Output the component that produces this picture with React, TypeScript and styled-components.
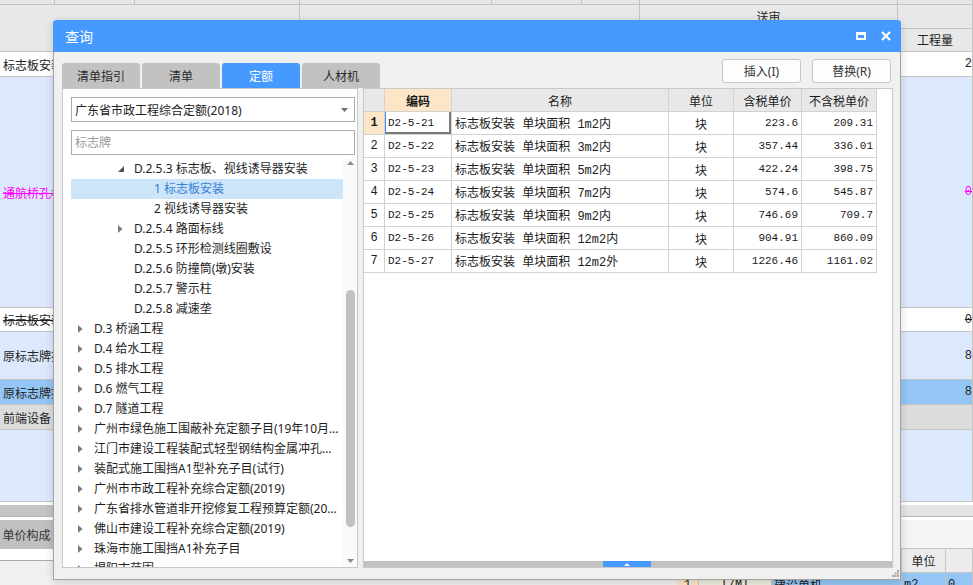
import React from 'react';
import styled, { createGlobalStyle, css } from 'styled-components';

const UI_FONT = `"Noto Sans", "Noto Sans CJK SC", sans-serif`;
const CJK_FONT = `"Noto Sans CJK SC", sans-serif`;
const GRID_FONT = `"Liberation Mono", "Noto Sans CJK SC", monospace`;

const BLUE = '#4599ff';
const LINE = '#c4c4c4';

const GlobalStyle = createGlobalStyle`
  html, body { margin: 0; padding: 0; }
  body { background: #f0f0f0; font-family: ${UI_FONT}; overflow: hidden; }
  * { box-sizing: border-box; }
`;

const Page = styled.div`
  position: relative;
  width: 973px;
  height: 585px;
  overflow: hidden;
  background: #f0f0f0;
  font-family: ${UI_FONT};
  font-size: 12px;
  color: #1e1e1e;
`;

/* ---------- spreadsheet behind the dialog ---------- */

const Sheet = styled.div`
  display: flex;
  flex-direction: column;
  height: 100%;
  & > * { flex-shrink: 0; }
`;

const TopStrip = styled.div`
  display: flex;
  height: 5px;
  background: #e6e6e6;
  border-bottom: 1px solid ${LINE};
`;

const StripCell = styled.div<{ $w?: number }>`
  flex: ${p => (p.$w ? `0 0 ${p.$w}px` : '1')};
  border-right: 1px solid ${LINE};
`;

const HeaderBand = styled.div`
  display: flex;
  height: 47px;
  background: #e8e8e8;
  border-bottom: 1px solid ${LINE};
`;

const HeadBlock = styled.div<{ $w?: number }>`
  flex: ${p => (p.$w ? `0 0 ${p.$w}px` : '1')};
  display: flex;
  flex-direction: column;
  border-right: 1px solid ${LINE};
`;

const HeadLabel = styled.div<{ $split?: boolean }>`
  flex: 1;
  display: flex;
  align-items: center;
  justify-content: center;
  font-family: ${CJK_FONT};
  font-size: 12px;
  color: #222;
  border-bottom: ${p => (p.$split ? `1px solid ${LINE}` : 'none')};
`;

const SheetRow = styled.div<{ $h: number; $bg: string }>`
  display: grid;
  grid-template-columns: 55px 1fr 75px;
  height: ${p => p.$h}px;
  background: ${p => p.$bg};
  border-bottom: 1px solid ${LINE};
`;

type Tone = 'plain' | 'struck' | 'pink';

const SheetCell = styled.div<{ $right?: boolean; $tone?: Tone }>`
  display: flex;
  align-items: center;
  justify-content: ${p => (p.$right ? 'flex-end' : 'flex-start')};
  padding-left: ${p => (p.$right ? 0 : 3)}px;
  overflow: hidden;
  white-space: nowrap;
  border-right: 1px solid ${LINE};
  font-family: ${p => (p.$right ? GRID_FONT : CJK_FONT)};
  font-size: 12px;
  color: ${p => (p.$tone === 'pink' ? '#ff00ff' : '#222')};
  text-decoration: ${p => (p.$tone && p.$tone !== 'plain' ? 'line-through' : 'none')};
`;

const WhiteGap = styled.div<{ $h: number }>`
  height: ${p => p.$h}px;
  background: #fff;
`;

const SplitBar = styled.div`
  display: grid;
  grid-template-columns: 55px 1fr;
  height: 12px;
  background: #e4e4e4;
  border-bottom: 1px solid #b8b8b8;
  & > span { background: #c4c4c4; }
`;

const BottomPane = styled.div`
  flex: 1 1 auto !important;
  min-height: 0;
  overflow: hidden;
  display: flex;
  flex-direction: column;
`;

const PaneTabs = styled.div`
  flex-shrink: 0;
  display: flex;
  height: 29px;
  background: #f4f4f4;
  border-bottom: 1px solid ${LINE};
`;

const PaneTab = styled.div`
  width: 53px;
  display: flex;
  align-items: center;
  justify-content: center;
  background: #c0c0c0;
  font-family: ${CJK_FONT};
  font-size: 12px;
  color: #333;
`;

const PaneBody = styled.div`
  flex: 1;
  display: grid;
  grid-template-columns: 677px 1fr;
`;

const PaneLeft = styled.div`
  display: flex;
  flex-direction: column;
  background: #f0f0f0;
  & > span {
    height: 12px;
    background: #fff;
    border-bottom: 1px solid #aaa;
  }
`;

const SubTable = styled.div`
  display: grid;
  grid-template-columns: 22px 73px 130px 44px 1fr;
  grid-auto-rows: 24px;
  align-content: start;
`;

const SubCell = styled.div<{ $bg: string; $center?: boolean }>`
  display: flex;
  align-items: center;
  justify-content: ${p => (p.$center ? 'center' : 'flex-start')};
  padding-left: ${p => (p.$center ? 0 : 2)}px;
  background: ${p => p.$bg};
  border-right: 1px solid ${LINE};
  border-bottom: 1px solid ${LINE};
  font-family: ${GRID_FONT};
  font-size: 12px;
  white-space: nowrap;
  overflow: hidden;
`;

/* ---------- dialog ---------- */

const Dialog = styled.div`
  position: absolute;
  left: 53px;
  top: 20px;
  width: 848px;
  height: 560px;
  display: flex;
  flex-direction: column;
  background: #f0f0f0;
  border: 1px solid #a3a3a3;
  border-top: none;
  border-radius: 4px 4px 0 0;
  box-shadow: 0 2px 8px rgba(0, 0, 0, 0.16);
`;

const TitleBar = styled.div`
  flex-shrink: 0;
  height: 32px;
  margin: 0 -1px;
  display: flex;
  align-items: center;
  padding: 0 10px 0 12px;
  background: ${BLUE};
  border-radius: 4px 4px 0 0;
  color: #fff;
  font-family: ${CJK_FONT};
  font-size: 14px;
`;

const TitleText = styled.span`
  flex: 1;
`;

const MaxIcon = styled.span`
  width: 10px;
  height: 8px;
  border: 2px solid #fff;
  border-top-width: 3px;
  margin-right: 15px;
`;

const Body = styled.div`
  position: relative;
  flex: 1;
  min-height: 0;
  display: flex;
  flex-direction: column;
  padding: 7px 7px 11px 8px;
`;

const Toolbar = styled.div`
  flex-shrink: 0;
  display: flex;
  align-items: flex-end;
  height: 29px;
`;

const Tabs = styled.div`
  display: flex;
  gap: 2px;
`;

const Tab = styled.div<{ $active?: boolean }>`
  width: 78px;
  height: 25px;
  display: flex;
  align-items: center;
  justify-content: center;
  border-radius: 3px 3px 0 0;
  background: ${p => (p.$active ? BLUE : '#c2c2c2')};
  color: ${p => (p.$active ? '#fff' : '#2a2a2a')};
  font-family: ${CJK_FONT};
  font-size: 12px;
`;

const Actions = styled.div`
  margin-left: auto;
  margin-right: 2px;
  align-self: flex-start;
  display: flex;
  gap: 11px;
`;

const ActionButton = styled.div`
  width: 79px;
  height: 24px;
  display: flex;
  align-items: center;
  justify-content: center;
  background: #fdfdfd;
  border: 1px solid #c6c6c6;
  border-radius: 3px;
  font-family: ${UI_FONT};
  font-size: 12px;
  color: #333;
`;

const Main = styled.div`
  flex: 1;
  display: flex;
  gap: 5px;
  min-height: 0;
`;

const LeftPanel = styled.div`
  width: 296px;
  display: flex;
  flex-direction: column;
  padding: 8px 0 0 8px;
  background: #fff;
  border: 1px solid #c8c8c8;
  min-height: 0;
`;

const Select = styled.div`
  flex-shrink: 0;
  height: 25px;
  margin-right: 2px;
  display: flex;
  align-items: center;
  justify-content: space-between;
  padding: 0 6px 0 3px;
  border: 1px solid #ababab;
  font-size: 12px;
  color: #222;
`;

const Search = styled.input`
  flex-shrink: 0;
  height: 25px;
  margin: 8px 2px 0 0;
  padding: 0 3px;
  border: 1px solid #ababab;
  outline: none;
  font-family: ${UI_FONT};
  font-size: 12px;
  color: #222;
  &::placeholder { color: #9a9a9a; }
`;

const Tree = styled.div`
  flex: 1;
  display: flex;
  margin-top: 4px;
  min-height: 0;
`;

const TreeList = styled.div`
  flex: 1;
  min-width: 0;
  overflow: hidden;
`;

const TreeRow = styled.div<{ $level: number; $selected?: boolean }>`
  height: 20px;
  display: flex;
  align-items: center;
  padding-left: ${p => 5 + p.$level * 20}px;
  background: ${p => (p.$selected ? '#cce5f8' : 'transparent')};
  color: ${p => (p.$selected ? '#3a7fd6' : '#1e1e1e')};
  font-size: 12px;
  line-height: 20px;
`;

const Toggle = styled.span`
  flex: 0 0 18px;
  display: flex;
  align-items: center;
  padding-left: 2px;
`;

const TreeText = styled.span`
  flex: 1;
  min-width: 0;
  overflow: hidden;
  white-space: nowrap;
  text-overflow: ellipsis;
`;

const VScroll = styled.div`
  flex: 0 0 14px;
  display: flex;
  flex-direction: column;
  align-items: center;
  padding: 2px 0 4px;
  background: #fafafa;
`;

const Thumb = styled.div`
  width: 9px;
  height: 237px;
  margin-top: 125px;
  border-radius: 5px;
  background: #c1c1c1;
`;

const DownArrow = styled.div`
  margin-top: auto;
  display: flex;
`;

const GridPanel = styled.div`
  flex: 1;
  display: flex;
  flex-direction: column;
  background: #fff;
  border: 1px solid #c8c8c8;
  min-width: 0;
`;

const Table = styled.div`
  flex: 1;
  display: grid;
  grid-template-columns: 21px 67px 217px 65px 68px 75px;
  grid-auto-rows: 23px;
  align-content: start;
`;

type Kind = 'head' | 'num' | 'code' | 'text' | 'unit' | 'price';

const Cell = styled.div<{ $kind: Kind; $bg?: string; $bold?: boolean; $focus?: boolean }>`
  display: flex;
  align-items: center;
  justify-content: ${p =>
    p.$kind === 'price' ? 'flex-end' : p.$kind === 'code' || p.$kind === 'text' ? 'flex-start' : 'center'};
  padding: 0 3px;
  background: ${p => p.$bg ?? '#fff'};
  border-right: 1px solid #d2d2d2;
  border-bottom: 1px solid #d2d2d2;
  font-family: ${p => (p.$kind === 'head' || p.$kind === 'unit' ? CJK_FONT : GRID_FONT)};
  font-size: ${p => (p.$kind === 'code' || p.$kind === 'price' ? 11 : 12)}px;
  font-weight: ${p => (p.$bold ? 700 : 400)};
  color: #1a1a1a;
  white-space: pre;
  overflow: hidden;
  ${p =>
    p.$focus &&
    css`
      box-shadow: inset 1px 0 0 #3d8ef8, inset -2px -2px 0 #7c7c7c;
    `}
`;

const HScroll = styled.div`
  flex-shrink: 0;
  height: 6px;
  display: flex;
  background: #c2c2c2;
`;

const HHandle = styled.div`
  width: 48px;
  margin-left: 239px;
  display: flex;
  align-items: center;
  justify-content: center;
  background: ${BLUE};
`;

const Grip = styled.svg`
  position: absolute;
  right: 1px;
  bottom: 2px;
`;

/* ---------- data ---------- */

type Node = { level: number; text: string; toggle?: 'open' | 'closed'; selected?: boolean };

const treeNodes: Node[] = [
  { level: 2, text: 'D.2.5.3 标志板、视线诱导器安装', toggle: 'open' },
  { level: 3, text: '1 标志板安装', selected: true },
  { level: 3, text: '2 视线诱导器安装' },
  { level: 2, text: 'D.2.5.4 路面标线', toggle: 'closed' },
  { level: 2, text: 'D.2.5.5 环形检测线圈敷设' },
  { level: 2, text: 'D.2.5.6 防撞筒(墩)安装' },
  { level: 2, text: 'D.2.5.7 警示柱' },
  { level: 2, text: 'D.2.5.8 减速垄' },
  { level: 0, text: 'D.3 桥涵工程', toggle: 'closed' },
  { level: 0, text: 'D.4 给水工程', toggle: 'closed' },
  { level: 0, text: 'D.5 排水工程', toggle: 'closed' },
  { level: 0, text: 'D.6 燃气工程', toggle: 'closed' },
  { level: 0, text: 'D.7 隧道工程', toggle: 'closed' },
  { level: 0, text: '广州市绿色施工围蔽补充定额子目(19年10月版)', toggle: 'closed' },
  { level: 0, text: '江门市建设工程装配式轻型钢结构金属冲孔板围挡', toggle: 'closed' },
  { level: 0, text: '装配式施工围挡A1型补充子目(试行)', toggle: 'closed' },
  { level: 0, text: '广州市市政工程补充综合定额(2019)', toggle: 'closed' },
  { level: 0, text: '广东省排水管道非开挖修复工程预算定额(2020)', toggle: 'closed' },
  { level: 0, text: '佛山市建设工程补充综合定额(2019)', toggle: 'closed' },
  { level: 0, text: '珠海市施工围挡A1补充子目', toggle: 'closed' },
  { level: 0, text: '揭阳市范围', toggle: 'closed' },
];

const quotaRows = [
  ['D2-5-21', '标志板安装 单块面积 1m2内', '块', '223.6', '209.31'],
  ['D2-5-22', '标志板安装 单块面积 3m2内', '块', '357.44', '336.01'],
  ['D2-5-23', '标志板安装 单块面积 5m2内', '块', '422.24', '398.75'],
  ['D2-5-24', '标志板安装 单块面积 7m2内', '块', '574.6', '545.87'],
  ['D2-5-25', '标志板安装 单块面积 9m2内', '块', '746.69', '709.7'],
  ['D2-5-26', '标志板安装 单块面积 12m2内', '块', '904.91', '860.09'],
  ['D2-5-27', '标志板安装 单块面积 12m2外', '块', '1226.46', '1161.02'],
];

const sheetRows: { h: number; bg: string; left: string; right: string; tone?: Tone }[] = [
  { h: 25, bg: '#fff', left: '标志板安装', right: '2' },
  { h: 231, bg: '#dce9fc', left: '通航桥孔标志', right: '0', tone: 'pink' },
  { h: 24, bg: '#fff', left: '标志板安装', right: '0', tone: 'struck' },
  { h: 48, bg: '#dce9fc', left: '原标志牌拆除', right: '8' },
  { h: 25, bg: '#93c6f4', left: '原标志牌拆除', right: '8' },
  { h: 25, bg: '#dcdcdc', left: '前端设备', right: '' },
  { h: 72, bg: '#dce9fc', left: '', right: '' },
];

const PEACH = '#fde6c8';

function TreeToggle({ kind }: { kind?: 'open' | 'closed' }) {
  if (kind === 'open') {
    return (
      <svg width="6" height="6" viewBox="0 0 6 6">
        <polygon points="6,0 6,6 0,6" fill="#505050" />
      </svg>
    );
  }
  if (kind === 'closed') {
    return (
      <svg width="5" height="8" viewBox="0 0 5 8">
        <polygon points="0,0 4.5,4 0,8" fill="#7a7a7a" />
      </svg>
    );
  }
  return null;
}

export default function App() {
  return (
    <Page>
      <GlobalStyle />
      <Sheet>
        <TopStrip>
          {[55, 80, 165, 192, 90, 58, 258].map(w => (
            <StripCell key={w} $w={w} />
          ))}
          <StripCell />
        </TopStrip>
        <HeaderBand>
          <HeadBlock $w={300} />
          <HeadBlock $w={340} />
          <HeadBlock $w={258}>
            <HeadLabel $split>送审</HeadLabel>
            <HeadLabel />
          </HeadBlock>
          <HeadBlock>
            <HeadLabel $split />
            <HeadLabel>工程量</HeadLabel>
          </HeadBlock>
        </HeaderBand>
        {sheetRows.map((r, i) => (
          <SheetRow key={i} $h={r.h} $bg={r.bg}>
            <SheetCell $tone={r.tone}>{r.left}</SheetCell>
            <SheetCell />
            <SheetCell $right $tone={r.tone}>
              {r.right}
            </SheetCell>
          </SheetRow>
        ))}
        <WhiteGap $h={3} />
        <SplitBar>
          <span />
        </SplitBar>
        <WhiteGap $h={3} />
        <BottomPane>
          <PaneTabs>
            <PaneTab>单价构成</PaneTab>
          </PaneTabs>
          <PaneBody>
            <PaneLeft>
              <span />
            </PaneLeft>
            <SubTable>
              <SubCell $bg="#ececec" />
              <SubCell $bg="#ececec" $center>编码</SubCell>
              <SubCell $bg="#ececec" $center>名称</SubCell>
              <SubCell $bg="#ececec" $center>单位</SubCell>
              <SubCell $bg="#ececec" />
              <SubCell $bg={PEACH} $center>1</SubCell>
              <SubCell $bg="#efedde" $center>T7MT</SubCell>
              <SubCell $bg="#93c6f4">建设单机</SubCell>
              <SubCell $bg="#93c6f4">m2</SubCell>
              <SubCell $bg="#93c6f4">0</SubCell>
            </SubTable>
          </PaneBody>
        </BottomPane>
      </Sheet>

      <Dialog>
        <TitleBar>
          <TitleText>查询</TitleText>
          <MaxIcon />
          <svg width="10" height="10" viewBox="0 0 10 10">
            <path d="M1 1 L9 9 M9 1 L1 9" stroke="#fff" strokeWidth="2.2" />
          </svg>
        </TitleBar>
        <Body>
          <Toolbar>
            <Tabs>
              <Tab>清单指引</Tab>
              <Tab>清单</Tab>
              <Tab $active>定额</Tab>
              <Tab>人材机</Tab>
            </Tabs>
            <Actions>
              <ActionButton>插入(I)</ActionButton>
              <ActionButton>替换(R)</ActionButton>
            </Actions>
          </Toolbar>
          <Main>
            <LeftPanel>
              <Select>
                <span>广东省市政工程综合定额(2018)</span>
                <svg width="7" height="4" viewBox="0 0 7 4">
                  <polygon points="0,0 7,0 3.5,4" fill="#707070" />
                </svg>
              </Select>
              <Search placeholder="标志牌" readOnly />
              <Tree>
                <TreeList>
                  {treeNodes.map((n, i) => (
                    <TreeRow key={i} $level={n.level} $selected={n.selected}>
                      <Toggle>
                        <TreeToggle kind={n.toggle} />
                      </Toggle>
                      <TreeText>{n.text}</TreeText>
                    </TreeRow>
                  ))}
                </TreeList>
                <VScroll>
                  <svg width="7" height="4" viewBox="0 0 7 4">
                    <polygon points="0,4 3.5,0 7,4" fill="#8a8a8a" />
                  </svg>
                  <Thumb />
                  <DownArrow>
                    <svg width="7" height="4" viewBox="0 0 7 4">
                      <polygon points="0,0 7,0 3.5,4" fill="#8a8a8a" />
                    </svg>
                  </DownArrow>
                </VScroll>
              </Tree>
            </LeftPanel>
            <GridPanel>
              <Table>
                <Cell $kind="head" $bg="#e8e8e8" />
                <Cell $kind="head" $bg={PEACH} $bold>
                  编码
                </Cell>
                <Cell $kind="head" $bg="#e8e8e8">
                  名称
                </Cell>
                <Cell $kind="head" $bg="#e8e8e8">
                  单位
                </Cell>
                <Cell $kind="head" $bg="#e8e8e8">
                  含税单价
                </Cell>
                <Cell $kind="head" $bg="#e8e8e8">
                  不含税单价
                </Cell>
                {quotaRows.map((r, i) => (
                  <React.Fragment key={r[0]}>
                    <Cell $kind="num" $bg={i === 0 ? PEACH : '#fff'} $bold={i === 0}>
                      {i + 1}
                    </Cell>
                    <Cell $kind="code" $focus={i === 0}>
                      {r[0]}
                    </Cell>
                    <Cell $kind="text">{r[1]}</Cell>
                    <Cell $kind="unit">{r[2]}</Cell>
                    <Cell $kind="price">{r[3]}</Cell>
                    <Cell $kind="price">{r[4]}</Cell>
                  </React.Fragment>
                ))}
              </Table>
              <HScroll>
                <HHandle>
                  <svg width="6" height="3" viewBox="0 0 6 3">
                    <polygon points="0,3 3,0 6,3" fill="#fff" />
                  </svg>
                </HHandle>
              </HScroll>
            </GridPanel>
          </Main>
          <Grip width="7" height="7" viewBox="0 0 7 7">
            {[
              [5, 0],
              [5, 2.5],
              [2.5, 2.5],
              [5, 5],
              [2.5, 5],
              [0, 5],
            ].map(([x, y], i) => (
              <rect key={i} x={x} y={y} width="2" height="2" fill="#a8a8a8" />
            ))}
          </Grip>
        </Body>
      </Dialog>
    </Page>
  );
}
